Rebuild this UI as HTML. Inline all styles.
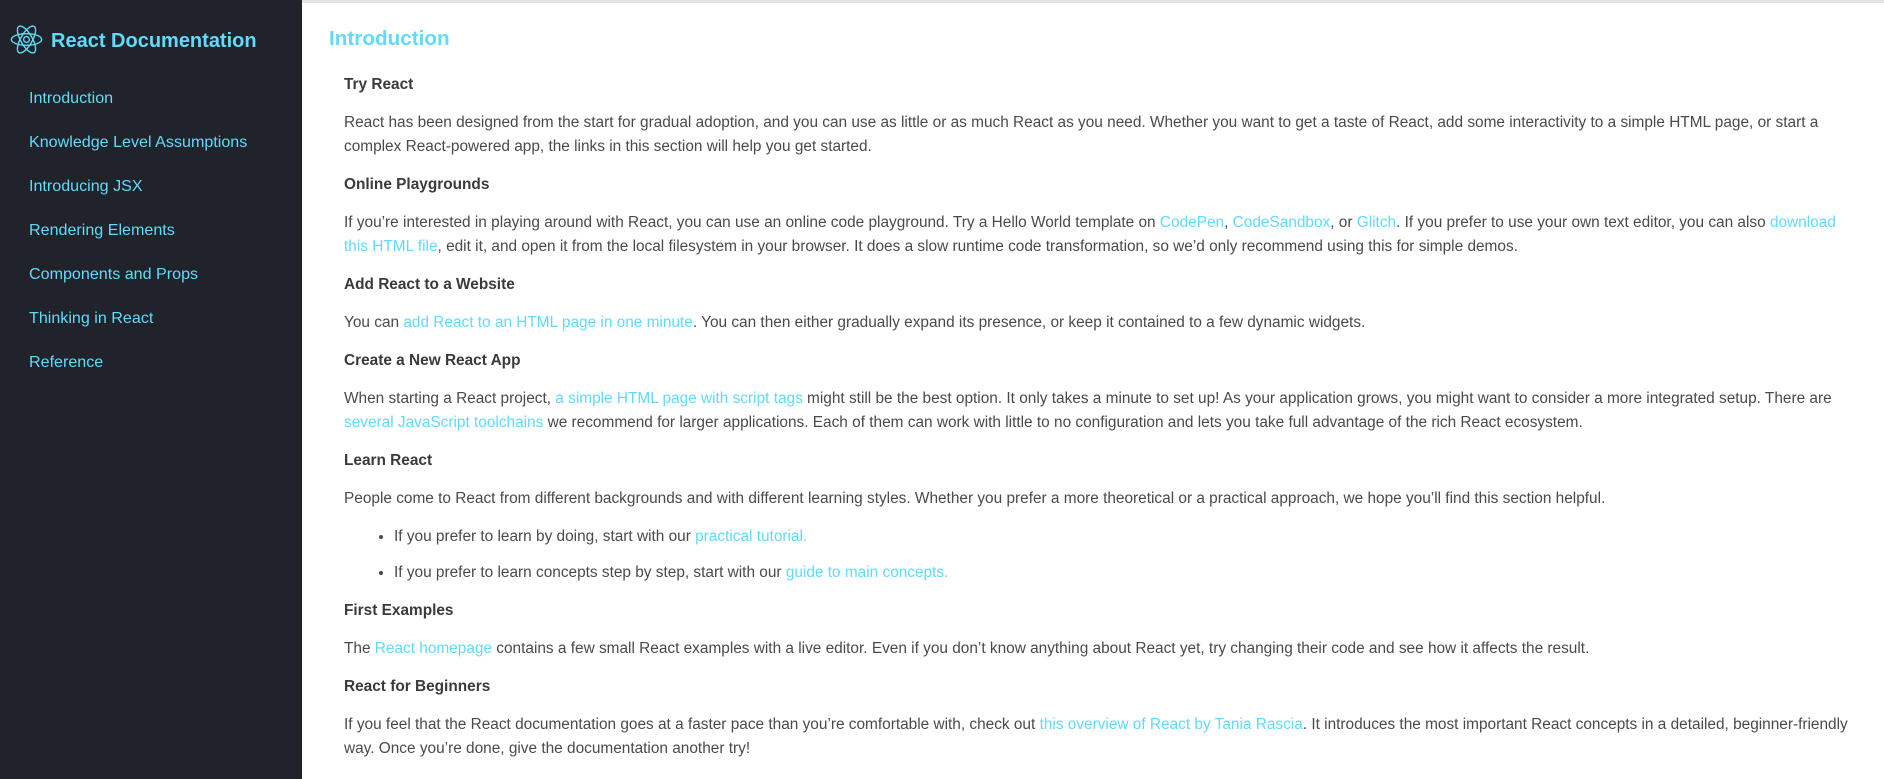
<!DOCTYPE html>
<html><head><meta charset="utf-8"><style>
*{margin:0;padding:0;box-sizing:border-box}
body{width:1884px;height:779px;overflow:hidden;font-family:"Liberation Sans",Arial,sans-serif;background:#fff;position:relative}
.side{position:absolute;left:0;top:0;width:302px;height:779px;background:#20232a}
.logo{position:absolute;left:10px;top:23px}
.title{position:absolute;left:51px;top:27px;color:#61dafb;font-weight:bold;font-size:20px;line-height:28px}
.nav a{position:absolute;left:29px;color:#61dafb;font-size:16.1px;text-decoration:none;line-height:20px}
.main{position:absolute;left:302px;top:0;right:0;height:779px;border-top:3px solid #e4e4e4}
h1{position:absolute;left:27px;top:22px;color:#61dafb;font-size:20.7px;line-height:28px}
.c{position:absolute;left:42px;top:70px;width:1505px;color:#4a4a4a;font-size:15.4px;line-height:24px}
h3{color:#3a3a3a;font-size:15.4px;line-height:24px;margin-bottom:14px}
p{margin-bottom:14px}
a{color:#61dafb;text-decoration:none}
ul{margin:4px 0 14px 50px}
li{margin-bottom:12px}
</style></head><body>
<div class="side">
<svg class="logo" width="33" height="33" viewBox="-12 -12 24 24" fill="none" stroke="#61dafb" stroke-width="1"><circle r="2.1" fill="none"/><ellipse rx="11" ry="4.2"/><ellipse rx="11" ry="4.2" transform="rotate(60)"/><ellipse rx="11" ry="4.2" transform="rotate(120)"/></svg>
<div class="title">React Documentation</div>
<div class="nav">
<a style="top:88px">Introduction</a>
<a style="top:132px">Knowledge Level Assumptions</a>
<a style="top:176px">Introducing JSX</a>
<a style="top:220px">Rendering Elements</a>
<a style="top:264px">Components and Props</a>
<a style="top:308px">Thinking in React</a>
<a style="top:352px">Reference</a>
</div></div>
<div class="main">
<h1>Introduction</h1>
<div class="c">
<h3>Try React</h3>
<p>React has been designed from the start for gradual adoption, and you can use as little or as much React as you need. Whether you want to get a taste of React, add some interactivity to a simple HTML page, or start a complex React-powered app, the links in this section will help you get started.</p>
<h3>Online Playgrounds</h3>
<p>If you’re interested in playing around with React, you can use an online code playground. Try a Hello World template on <a>CodePen</a>, <a>CodeSandbox</a>, or <a>Glitch</a>. If you prefer to use your own text editor, you can also <a>download this HTML file</a>, edit it, and open it from the local filesystem in your browser. It does a slow runtime code transformation, so we’d only recommend using this for simple demos.</p>
<h3>Add React to a Website</h3>
<p>You can <a>add React to an HTML page in one minute</a>. You can then either gradually expand its presence, or keep it contained to a few dynamic widgets.</p>
<h3>Create a New React App</h3>
<p>When starting a React project, <a>a simple HTML page with script tags</a> might still be the best option. It only takes a minute to set up! As your application grows, you might want to consider a more integrated setup. There are <a>several JavaScript toolchains</a> we recommend for larger applications. Each of them can work with little to no configuration and lets you take full advantage of the rich React ecosystem.</p>
<h3>Learn React</h3>
<p>People come to React from different backgrounds and with different learning styles. Whether you prefer a more theoretical or a practical approach, we hope you’ll find this section helpful.</p>
<ul><li>If you prefer to learn by doing, start with our <a>practical tutorial.</a></li><li>If you prefer to learn concepts step by step, start with our <a>guide to main concepts.</a></li></ul>
<h3>First Examples</h3>
<p>The <a>React homepage</a> contains a few small React examples with a live editor. Even if you don’t know anything about React yet, try changing their code and see how it affects the result.</p>
<h3>React for Beginners</h3>
<p>If you feel that the React documentation goes at a faster pace than you’re comfortable with, check out <a>this overview of React by Tania Rascia</a>. It introduces the most important React concepts in a detailed, beginner-friendly way. Once you’re done, give the documentation another try!</p>
</div></div>
</body></html>
